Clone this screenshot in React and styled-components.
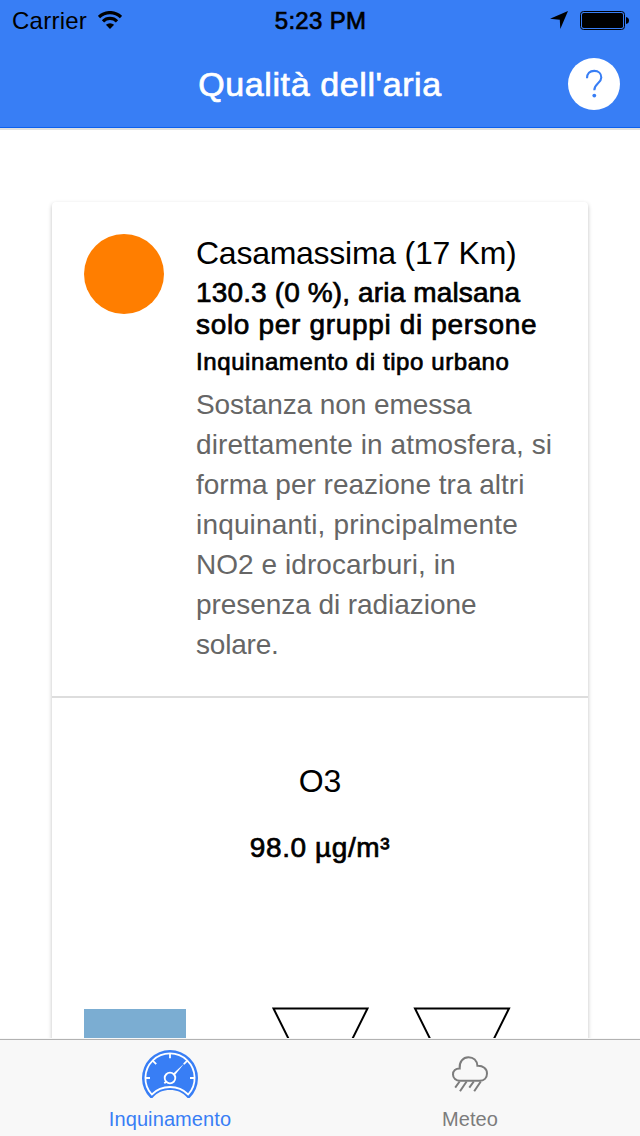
import React from "react";
import styled, { createGlobalStyle, css } from "styled-components";

const Global = createGlobalStyle`
  * { box-sizing: border-box; }
  html, body { margin: 0; height: 100%; overflow: hidden; background: #fff; }
  body { font-family: "Liberation Sans", Arial, sans-serif; color: #000; }
  svg { display: block; }
`;

const medium = css`
  -webkit-text-stroke: 0.7px currentColor;
`;

const Screen = styled.div`
  width: 640px;
  height: 1136px;
  display: flex;
  flex-direction: column;
  overflow: hidden;
  background: #fff;
`;

const Header = styled.header`
  height: 128px;
  flex: none;
  background: #387ef5;
  border-bottom: 1px solid #0c60ee;
`;

const HeaderShade = styled.div`
  height: 2px;
  flex: none;
  background: #e0e0e0;
`;

const StatusBar = styled.div`
  height: 40px;
  display: grid;
  grid-template-columns: 1fr auto 1fr;
  align-items: center;
  padding: 0 11px 0 12px;
  font-size: 24px;
  line-height: 38px;
`;

const StatusSide = styled.div`
  display: flex;
  align-items: center;
  gap: ${(p) => p.$gap}px;
  justify-content: ${(p) => (p.$end ? "flex-end" : "flex-start")};
`;

const Carrier = styled.span`
  padding-top: 2px;
  letter-spacing: 0.25px;
`;

const Clock = styled.span`
  ${medium}
  padding-top: 2px;
  letter-spacing: 0.3px;
`;

const NavBar = styled.div`
  height: 87px;
  display: grid;
  grid-template-columns: 52px 1fr 52px;
  align-items: center;
  padding: 0 20px;
`;

const Title = styled.h1`
  ${medium}
  grid-column: 2;
  margin: 0;
  font-size: 34px;
  font-weight: 400;
  line-height: 40px;
  letter-spacing: 0.6px;
  text-align: center;
  color: #fff;
`;

const HelpButton = styled.button`
  width: 52px;
  height: 52px;
  padding: 0;
  border: 0;
  border-radius: 50%;
  background: #fff;
`;

const Content = styled.main`
  height: 908px;
  flex: none;
  padding: 72px 52px 0;
  overflow: hidden;
`;

const Card = styled.section`
  height: 1000px;
  border-radius: 4px;
  background: #fff;
  box-shadow: 0 2px 4px rgba(0, 0, 0, 0.25);
`;

const Station = styled.div`
  height: 496px;
  display: flex;
  gap: 32px;
  padding: 32px 0 0 32px;
  border-bottom: 2px solid #ddd;
`;

const Level = styled.div`
  width: 80px;
  height: 80px;
  flex: none;
  border-radius: 50%;
  background: #ff7e00;
`;

const Details = styled.div`
  white-space: nowrap;
`;

const Place = styled.h2`
  margin: 1px 0 6px;
  font-size: 32px;
  font-weight: 400;
  line-height: 36px;
`;

const Summary = styled.h3`
  ${medium}
  margin: 0 0 7px;
  font-size: 28px;
  font-weight: 400;
  line-height: 32px;
`;

const Kind = styled.h4`
  ${medium}
  margin: 0 0 9px;
  font-size: 24px;
  font-weight: 400;
  line-height: 28px;
`;

const Description = styled.p`
  margin: 0;
  font-size: 28px;
  line-height: 40px;
  color: #666;
`;

const Line = styled.span`
  display: block;
  letter-spacing: ${(p) => p.$track || 0}px;
`;

const Reading = styled.div`
  display: flex;
  flex-direction: column;
  align-items: center;
  padding-top: 65px;
`;

const Pollutant = styled.h2`
  margin: 0 0 33px;
  font-size: 32px;
  font-weight: 400;
  line-height: 36px;
`;

const Amount = styled.h3`
  ${medium}
  margin: 0;
  font-size: 28px;
  font-weight: 400;
  line-height: 32px;
  letter-spacing: 0.6px;
`;

const Chart = styled.svg`
  margin-top: 143px;
`;

const TabBar = styled.nav`
  height: 98px;
  flex: none;
  display: flex;
  justify-content: center;
  background: #f8f8f8;
  padding-top: 1px;
`;

const TabRule = styled.div`
  width: 100%;
  border-top: 1px solid #b2b2b2;
  display: flex;
  justify-content: center;
`;

const Tab = styled.a`
  width: 300px;
  display: flex;
  flex-direction: column;
  align-items: center;
  font-size: 20px;
  line-height: 24px;
  color: ${(p) => (p.$active ? "#387ef5" : "#7c7c7c")};
`;

const TabIcon = styled.span`
  height: 67px;
  padding-top: 10px;
`;

const Wifi = () => (
  <svg width="24" height="18" viewBox="0 0 24 18">
    <g fill="none" stroke="#000" strokeWidth="3.2">
      <path d="M1 6.1A15.6 15.6 0 0 1 23 6.1" />
      <path d="M5 10.3A9.9 9.9 0 0 1 19 10.3" />
    </g>
    <path d="M12 18L7.9 13.8A5.9 5.9 0 0 1 16.1 13.8Z" />
  </svg>
);

const LocationArrow = () => (
  <svg width="18" height="18" viewBox="0 0 18 18">
    <path d="M18 0L10.3 18L9.8 8.7L0 7.8Z" />
  </svg>
);

const Battery = () => (
  <svg width="49" height="19" viewBox="0 0 49 19">
    <rect x="0.5" y="0.5" width="44" height="18" rx="3" fill="none" stroke="#000" />
    <rect x="2" y="2" width="41" height="15" rx="1.8" />
    <path d="M46 6Q49 6.5 49 9.5T46 13Z" />
  </svg>
);

const Question = () => (
  <svg width="52" height="52" viewBox="0 0 52 52">
    <path
      d="M19 20.3C19 15.6 21.8 12.9 26.2 12.9C30.5 12.9 33.3 15.6 33.3 19.4C33.3 25.3 26.3 25.4 26.3 32.3"
      fill="none"
      stroke="#387ef5"
      strokeWidth="2.1"
    />
    <circle cx="26.3" cy="37.6" r="1.9" fill="#387ef5" />
  </svg>
);

const Gauge = () => (
  <svg width="56" height="48" viewBox="0 0 56 48">
    <path
      d="M8.4 48A28 28 0 1 1 47.6 48L45.6 48C40.6 42.3 35 40 28 40S15.4 42.3 10.4 48Z"
      fill="#387ef5"
    />
    <g fill="none" stroke="#fff" strokeWidth="1.8">
      <path d="M9.8 44.5A24.6 24.6 0 1 1 46.2 44.5C41 39.2 35 37 28 37S15 39.2 9.8 44.5Z" />
      <path d="M3.5 28H8M48 28H52.5M28 3.5V8.3M10.7 10.7L14.2 14.2M45.3 10.7L41.8 14.2" />
      <circle cx="28" cy="28" r="5.3" />
      <path d="M24.4 31.5L22.3 33.2" />
    </g>
    <path d="M31 23.7L42.2 13.5L32.8 25.2Z" fill="#fff" />
  </svg>
);

const Rain = () => (
  <svg width="56" height="48" viewBox="0 0 56 48">
    <g fill="none" stroke="#7c7c7c" strokeWidth="2">
      <path d="M18 30.8C14 30.8 11 28 11 24.4C11 20.9 13.7 18.3 17.7 18.4C17.1 11.8 21 7.2 26.5 7.2C31.5 7.2 35 10.4 35.4 15.8C41 15.5 45 18.8 45 23.5C45 27.8 42 30.8 37.5 30.8Z" />
      <path d="M17.6 31.5L13.2 37.6M24.6 31.5L18 41.3M31.8 31.5L27.3 37.6M38.8 31.5L32.2 41.3" />
    </g>
  </svg>
);

const description = [
  ["Sostanza non emessa", -0.08],
  ["direttamente in atmosfera, si", 0.1],
  ["forma per reazione tra altri", 0],
  ["inquinanti, principalmente", 0.17],
  ["NO2 e idrocarburi, in", 0.06],
  ["presenza di radiazione", -0.06],
  ["solare.", -0.2],
];

export default function App() {
  return (
    <Screen>
      <Global />
      <Header>
        <StatusBar>
          <StatusSide $gap={11}>
            <Carrier>Carrier</Carrier>
            <Wifi />
          </StatusSide>
          <Clock>5:23 PM</Clock>
          <StatusSide $gap={12} $end>
            <LocationArrow />
            <Battery />
          </StatusSide>
        </StatusBar>
        <NavBar>
          <Title>Qualità dell'aria</Title>
          <HelpButton aria-label="Aiuto">
            <Question />
          </HelpButton>
        </NavBar>
      </Header>
      <HeaderShade />
      <Content>
        <Card>
          <Station>
            <Level />
            <Details>
              <Place>
                <Line $track={-0.26}>Casamassima (17 Km)</Line>
              </Place>
              <Summary>
                <Line $track={0.14}>130.3 (0 %), aria malsana</Line>
                <Line $track={0.67}>solo per gruppi di persone</Line>
              </Summary>
              <Kind>
                <Line $track={0.59}>Inquinamento di tipo urbano</Line>
              </Kind>
              <Description>
                {description.map(([text, track]) => (
                  <Line key={text} $track={track}>
                    {text}
                  </Line>
                ))}
              </Description>
            </Details>
          </Station>
          <Reading>
            <Pollutant>O3</Pollutant>
            <Amount>98.0 µg/m³</Amount>
            <Chart width="536" height="60" viewBox="0 0 536 60">
              <rect x="32" y="2" width="102" height="58" fill="#7badd2" />
              <g fill="none" stroke="#000" strokeWidth="2">
                <path d="M221.5 1.5H315.5L268.5 96Z" />
                <path d="M363 1.5H457L410 96Z" />
              </g>
            </Chart>
          </Reading>
        </Card>
      </Content>
      <TabBar>
        <TabRule>
          <Tab $active>
            <TabIcon>
              <Gauge />
            </TabIcon>
            <Line $track={0.1}>Inquinamento</Line>
          </Tab>
          <Tab>
            <TabIcon>
              <Rain />
            </TabIcon>
            <Line $track={0.1}>Meteo</Line>
          </Tab>
        </TabRule>
      </TabBar>
    </Screen>
  );
}
